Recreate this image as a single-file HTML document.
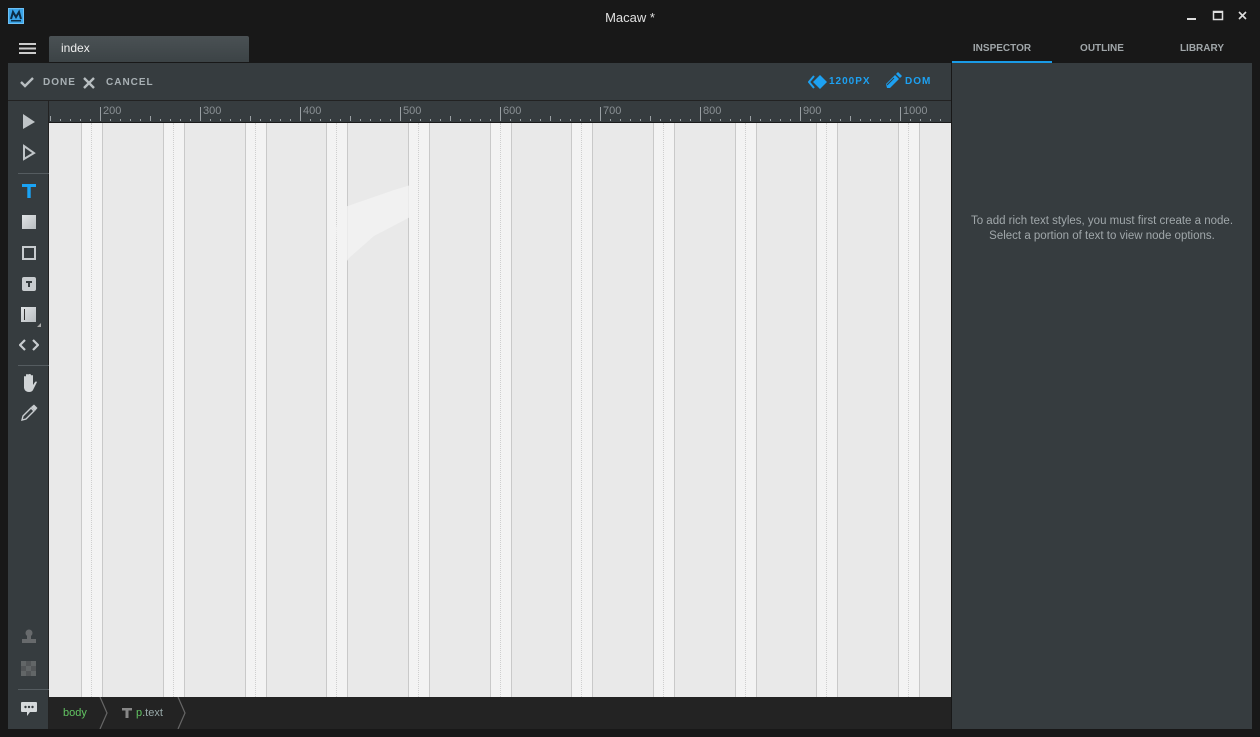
<!DOCTYPE html>
<html><head><meta charset="utf-8"><style>
*{margin:0;padding:0;box-sizing:border-box}
body{width:1260px;height:737px;background:#181818;position:relative;overflow:hidden;font-family:"Liberation Sans",sans-serif}
.abs{position:absolute}
.title{left:0;top:0;width:1260px;height:36px;text-align:center;line-height:36px;color:#e0e0e0;font-size:13px}
.tab{left:49px;top:36px;width:200px;height:26px;background:linear-gradient(#4a5154,#3c4346);border-radius:2px 2px 0 0;color:#eee;font-size:12px;line-height:25px;padding-left:12px}
.tb{left:8px;top:63px;width:943px;height:38px;background:#363c3f;border-bottom:1px solid #222}
.lbl{font-size:10px;font-weight:bold;letter-spacing:1px;color:#a8b0b4}
.blue{color:#1da1f2}
.ruler{left:49px;top:101px;width:902px;height:22px;background:#363c3f;border-bottom:1px solid #1c1c1c}
.ticks{left:0;bottom:1px;width:902px;height:2px;background:repeating-linear-gradient(90deg,transparent 0 2px,#9aa0a4 2px 3px,transparent 3px 10px);background-position:-1px 0}
.mid{left:0;bottom:1px;width:902px;height:5px;background:repeating-linear-gradient(90deg,transparent 0 2px,#9aa0a4 2px 3px,transparent 3px 50px);background-position:-1px 0}
.big{left:0;bottom:1px;width:902px;height:14px;background:repeating-linear-gradient(90deg,transparent 0 2px,#9aa0a4 2px 3px,transparent 3px 100px);background-position:49px 0}
.rn{font-size:11px;color:#8a9094;top:4px}
.tools{left:8px;top:101px;width:41px;height:628px;background:#363c3f;border-right:1px solid #222}
.canvas{left:49px;top:123px;width:902px;height:574px;background:#e9e9e9;overflow:hidden}
.col{top:0;width:22px;height:574px;background:#f3f3f3;border-left:1px solid #c9c9c9;border-right:1px solid #c9c9c9}
.col:after{content:"";position:absolute;left:9px;top:0;height:100%;border-left:1px dotted #cfcfcf}
.bc{left:49px;top:697px;width:902px;height:32px;background:#232323}
.rp{left:952px;top:63px;width:300px;height:666px;background:#363c3f}
.rt{top:36px;height:27px;line-height:26px;font-size:10px;font-weight:bold;color:#a0a6a9;text-align:center;width:100px}
.sep{left:10px;width:31px;height:1px;background:#555c60}
</style></head><body>
<div class="abs title">Macaw *</div>
<svg class="abs" style="left:8px;top:8px" width="16" height="16"><rect x="0.5" y="0.5" width="15" height="15" fill="#3aa4e8" stroke="#6cc0f5"/><path d="M3 11 L5 4 L8 9 L11 4 L13 11" stroke="#0d2c44" stroke-width="2" fill="none"/><rect x="3" y="12" width="10" height="1.5" fill="#0d2c44"/></svg>
<svg class="abs" style="left:1180px;top:8px" width="75" height="20"><rect x="7" y="10" width="9" height="2" fill="#ddd"/><rect x="33.5" y="3.5" width="9" height="8" fill="none" stroke="#ddd" stroke-width="1.5"/><rect x="33" y="3" width="10" height="2" fill="#ddd"/><path d="M59 4 L66 11 M66 4 L59 11" stroke="#ddd" stroke-width="1.6"/></svg>
<svg class="abs" style="left:19px;top:42px" width="18" height="14"><rect y="1" width="17" height="2" fill="#ccc"/><rect y="5.5" width="17" height="2" fill="#ccc"/><rect y="10" width="17" height="2" fill="#ccc"/></svg>
<div class="abs tab">index</div>
<div class="abs rt blue" style="left:952px">INSPECTOR</div>
<div class="abs" style="left:952px;top:61px;width:100px;height:2px;background:#1a9be6"></div>
<div class="abs rt" style="left:1052px">OUTLINE</div>
<div class="abs rt" style="left:1152px">LIBRARY</div>
<div class="abs tb">
 <svg class="abs" style="left:12px;top:13px" width="14" height="12"><path d="M1 6 L5 10 L13 2" stroke="#b8bec1" stroke-width="2.4" fill="none"/></svg>
 <div class="abs lbl" style="left:35px;top:14px">DONE</div>
 <svg class="abs" style="left:75px;top:14px" width="12" height="12"><path d="M1 1 L11 11 M11 1 L1 11" stroke="#b8bec1" stroke-width="2.4"/></svg>
 <div class="abs lbl" style="left:98px;top:14px">CANCEL</div>
 <svg class="abs" style="left:800px;top:11px" width="20" height="16"><path d="M6 2 L1 8 L6 14" stroke="#1da1f2" stroke-width="2" fill="none"/><path d="M12 1 L19 8 L12 15 L5 8Z" fill="#1da1f2"/></svg>
 <div class="abs lbl blue" style="left:821px;top:13px">1200PX</div>
 <svg class="abs" style="left:876px;top:9px" width="18" height="18"><path d="M3 16 L2 12 L11 3 L15 7 L6 16Z" fill="#1da1f2"/><path d="M12 2 L14 0 L18 4 L16 6Z" fill="#1da1f2"/><path d="M3 13 L10 6" stroke="#363c3f" stroke-width="1"/></svg>
 <div class="abs lbl blue" style="left:897px;top:13px">DOM</div>
</div>
<div class="abs ruler">
 <div class="abs ticks"></div><div class="abs mid"></div><div class="abs big"></div>
 <div class="abs rn" style="left:54px">200</div><div class="abs rn" style="left:154px">300</div><div class="abs rn" style="left:254px">400</div><div class="abs rn" style="left:354px">500</div><div class="abs rn" style="left:454px">600</div><div class="abs rn" style="left:554px">700</div><div class="abs rn" style="left:654px">800</div><div class="abs rn" style="left:754px">900</div><div class="abs rn" style="left:854px">1000</div>
</div>
<div class="abs tools">
 <svg class="abs" style="left:14px;top:12px" width="14" height="18"><path d="M1 1 L13 9 L1 16Z" fill="#c0c5c8"/></svg>
 <svg class="abs" style="left:14px;top:43px" width="14" height="18"><path d="M2 2 L12 9 L2 15Z" fill="none" stroke="#c0c5c8" stroke-width="2"/></svg>
 <div class="abs sep" style="top:72px"></div>
 <svg class="abs" style="left:13px;top:82px" width="16" height="16"><path d="M1 1 H15 V4 H9.7 V15 H6.3 V4 H1Z" fill="#1aa3f5"/></svg>
 <div class="abs" style="left:14px;top:114px;width:14px;height:14px;background:linear-gradient(135deg,#e0e3e5,#b8bdc0)"></div>
 <div class="abs" style="left:14px;top:145px;width:14px;height:14px;border:2px solid #c8cccf"></div>
 <div class="abs" style="left:14px;top:176px;width:14px;height:14px;background:#c8cccf;border-radius:2px"><div class="abs" style="left:4px;top:4px;width:6px;height:2px;background:#363c3f"></div><div class="abs" style="left:6px;top:4px;width:2px;height:6px;background:#363c3f"></div></div>
 <div class="abs" style="left:13px;top:206px;width:15px;height:15px;background:linear-gradient(135deg,#e0e3e5,#b8bdc0)"><div class="abs" style="left:3px;top:2px;width:1px;height:11px;background:#333"></div></div>
 <div class="abs" style="left:29px;top:222px;border:2px solid transparent;border-right-color:#aaa;border-bottom-color:#aaa"></div>
 <svg class="abs" style="left:11px;top:237px" width="20" height="14"><path d="M6 2 L1 7 L6 12 M14 2 L19 7 L14 12" stroke="#c8cccf" stroke-width="2.2" fill="none"/></svg>
 <div class="abs sep" style="top:264px"></div>
 <svg class="abs" style="left:12px;top:272px" width="18" height="20"><path d="M4 10 V4 Q4 3 5 3 Q6 3 6 4 V9 V2 Q6 1 7 1 Q8 1 8 2 V9 V2 Q8 1 9.5 1 Q11 1 11 2 V9 V3 Q11 2 12 2 Q13 2 13 3 V12 L15 9 Q16 8 17 9 L13 17 Q12 19 9 19 Q5 19 4 15Z" fill="#d0d4d6"/></svg>
 <svg class="abs" style="left:12px;top:303px" width="18" height="18"><path d="M2 16 L3 12 L11 4 L14 7 L6 15Z" fill="none" stroke="#c8cccf" stroke-width="1.4"/><path d="M11 3 L14 0.5 L17.5 4 L15 7Z" fill="#c8cccf"/></svg>
 <svg class="abs" style="left:13px;top:528px" width="16" height="16" opacity=".5"><circle cx="8" cy="4" r="3.5" fill="#999"/><path d="M6 7 H10 V10 H15 V14 H1 V10 H6Z" fill="#999"/></svg>
 <svg class="abs" style="left:13px;top:560px" width="15" height="15" opacity=".45"><rect width="15" height="15" fill="#777"/><rect width="5" height="5" fill="#999"/><rect x="10" width="5" height="5" fill="#999"/><rect x="5" y="5" width="5" height="5" fill="#999"/><rect y="10" width="5" height="5" fill="#999"/><rect x="10" y="10" width="5" height="5" fill="#999"/></svg>
 <div class="abs sep" style="top:588px"></div>
 <svg class="abs" style="left:12px;top:600px" width="18" height="16"><path d="M2 1 H16 Q17 1 17 2 V10 Q17 11 16 11 H10 L7 15 V11 H2 Q1 11 1 10 V2 Q1 1 2 1Z" fill="#d6dadc"/><circle cx="5.5" cy="6" r="1.2" fill="#363c3f"/><circle cx="9" cy="6" r="1.2" fill="#363c3f"/><circle cx="12.5" cy="6" r="1.2" fill="#363c3f"/></svg>
</div>
<div class="abs canvas">
 <div class="abs col" style="left:32px"></div><div class="abs col" style="left:114px"></div><div class="abs col" style="left:196px"></div><div class="abs col" style="left:277px"></div><div class="abs col" style="left:359px"></div><div class="abs col" style="left:441px"></div><div class="abs col" style="left:522px"></div><div class="abs col" style="left:604px"></div><div class="abs col" style="left:686px"></div><div class="abs col" style="left:767px"></div><div class="abs col" style="left:849px"></div>
 <svg class="abs" style="left:285px;top:55px" width="85" height="100"><path d="M8 30 L60 12 L80 6 L82 36 L40 58 L15 80 L5 95 L2 50Z" fill="#f2f2f2" opacity=".8"/></svg>
</div>
<div class="abs bc">
 <div class="abs" style="left:14px;top:10px;font-size:11px;color:#62c462">body</div>
 <svg class="abs" style="left:50px;top:0" width="10" height="32"><path d="M1 0 L8 16 L1 32" stroke="#666" stroke-width="1.2" fill="none"/></svg>
 <svg class="abs" style="left:73px;top:11px" width="10" height="10"><path d="M0 0 H10 V2.5 H6.5 V10 H3.5 V2.5 H0Z" fill="#888"/></svg>
 <div class="abs" style="left:87px;top:10px;font-size:11px;color:#9aa"><span style="color:#62c462">p</span>.text</div>
 <svg class="abs" style="left:128px;top:0" width="10" height="32"><path d="M1 0 L8 16 L1 32" stroke="#666" stroke-width="1.2" fill="none"/></svg>
</div>
<div class="abs rp">
 <div class="abs" style="left:0;top:151px;width:300px;text-align:center;font-size:11.5px;line-height:15px;color:#a0a7aa">To add rich text styles, you must first create a node.<br>Select a portion of text to view node options.</div>
</div>
</body></html>
